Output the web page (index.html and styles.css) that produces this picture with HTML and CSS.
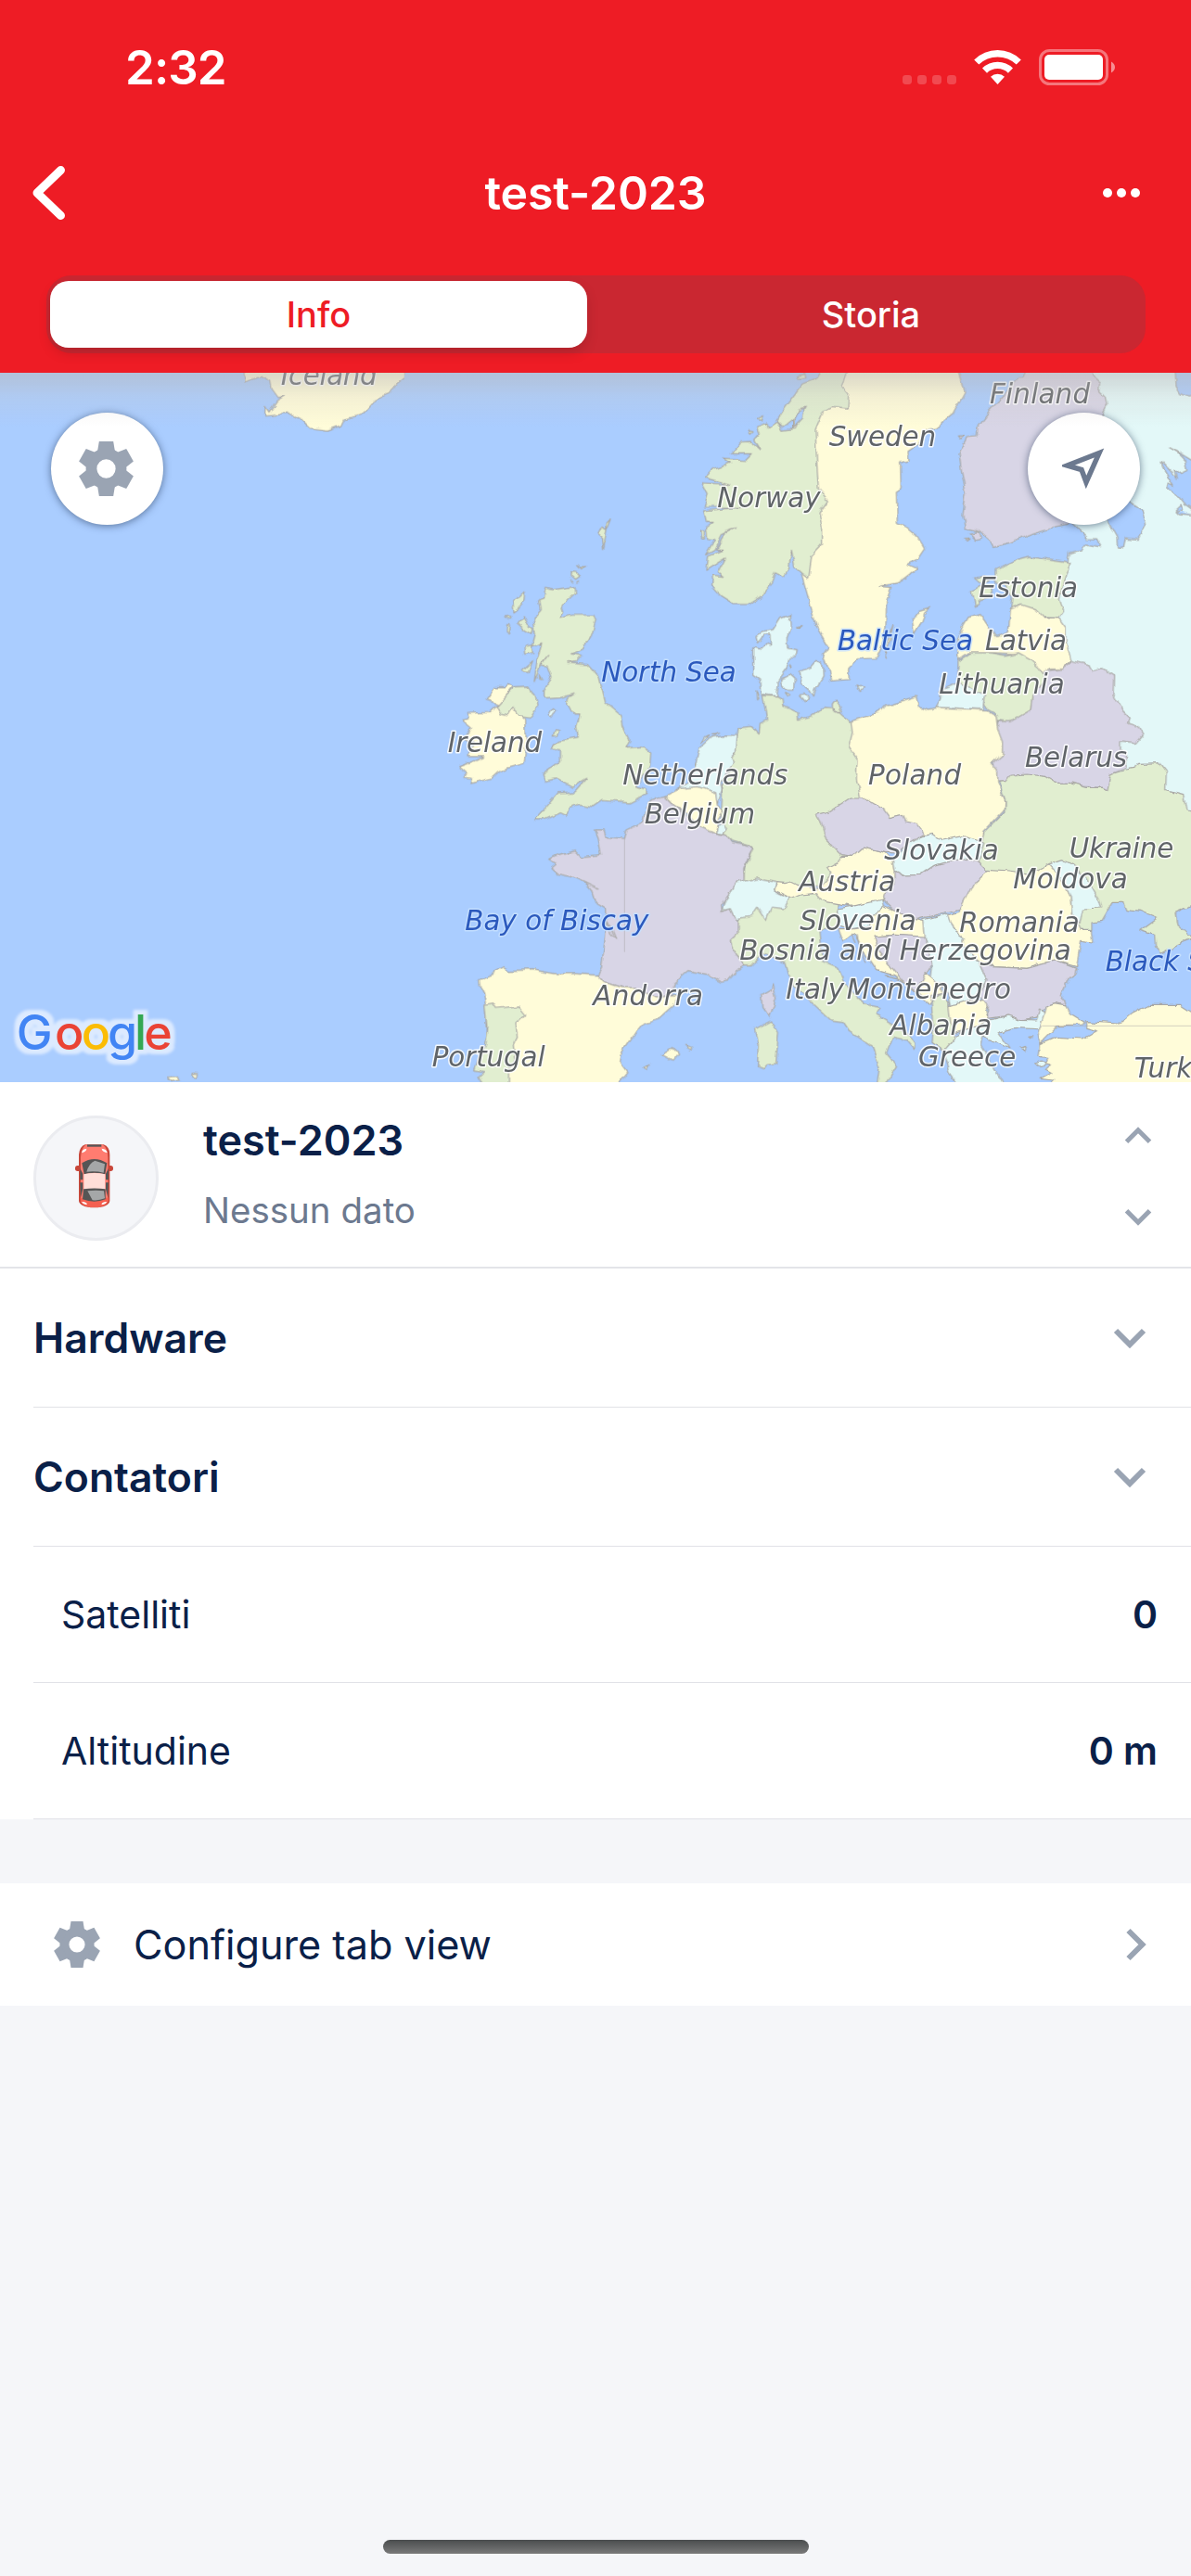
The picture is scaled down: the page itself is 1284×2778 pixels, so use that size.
FILE: index.html
```html
<!DOCTYPE html>
<html lang="it">
<head>
<meta charset="utf-8">
<title>test-2023</title>
<link rel="stylesheet" href="styles.css">
</head>
<body>
<svg width="0" height="0" class="defs" aria-hidden="true">
  <symbol id="gear" viewBox="-30 -30 60 60">
    <circle r="16.3" fill="none" stroke="currentColor" stroke-width="12"/>
    <g fill="currentColor">
      <path id="tooth" d="M-7.8-30H7.8L9.6-19H-9.6Z"/>
      <use href="#tooth" transform="rotate(60)"/><use href="#tooth" transform="rotate(120)"/>
      <use href="#tooth" transform="rotate(180)"/><use href="#tooth" transform="rotate(240)"/>
      <use href="#tooth" transform="rotate(300)"/>
    </g>
  </symbol>
  <symbol id="chevron" viewBox="0 0 36 22"><path d="M3 3L18 18L33 3" fill="none" stroke="currentColor" stroke-width="6"/></symbol>
</svg>
<div class="screen">
  <header class="header">
    <div class="status">
      <span class="time">2:32</span>
      <svg class="indicators" width="230" height="44" viewBox="972 50 230 44">
        <g fill="#fff" opacity=".2"><rect x="973" y="81" width="10" height="10" rx="3.4"/><rect x="989" y="81" width="10" height="10" rx="3.4"/><rect x="1005" y="81" width="10" height="10" rx="3.4"/><rect x="1021" y="81" width="10" height="10" rx="3.4"/></g>
        <g fill="#fff"><path d="M1050.2 64.5A36 36 0 0 1 1100.8 64.5L1095.7 69.6A29 29 0 0 0 1055.3 69.6Z"/><path d="M1059 73.5A23.5 23.5 0 0 1 1092 73.5L1086.900 78.700A16.500 16.500 0 0 0 1064 78.700Z"/><path d="M1068 82.800A11 11 0 0 1 1083 82.800L1075.500 91Z"/></g>
        <rect x="1121.500" y="54.500" width="72" height="36" rx="10" fill="none" stroke="#fff" stroke-width="3" opacity=".4"/>
        <rect x="1126" y="59" width="63" height="27" rx="5" fill="#fff"/>
        <path d="M1198 66.500Q1202 69 1202 72.500T1198 78.500Z" fill="#fff" opacity=".5"/>
      </svg>
    </div>
    <div class="navbar">
      <svg class="back" width="38" height="62" viewBox="33 177 38 62"><path d="M65.500 183.500L40 208L65.500 232.500" fill="none" stroke="#fff" stroke-width="9" stroke-linecap="round" stroke-linejoin="round"/></svg>
      <h1 class="title">test-2023</h1>
      <svg class="more" width="40" height="10" viewBox="0 0 40 10" fill="#fff"><circle cx="5" cy="5" r="5"/><circle cx="20" cy="5" r="5"/><circle cx="35" cy="5" r="5"/></svg>
    </div>
    <div class="segments"><span class="segment active">Info</span><span class="segment">Storia</span></div>
  </header>

  <section class="map">
    <svg class="map-art" width="1284" height="765" viewBox="-1320 6 3852 2295">
      <defs>
        <filter id="coast" x="-1330" y="-20" width="3880" height="2340" filterUnits="userSpaceOnUse" color-interpolation-filters="sRGB"><feTurbulence type="fractalNoise" baseFrequency=".022" numOctaves="3" seed="4"/><feDisplacementMap in="SourceGraphic" scale="20" xChannelSelector="R" yChannelSelector="G"/></filter>
        <filter id="halo" x="-1320" y="2020" width="620" height="280" filterUnits="userSpaceOnUse" color-interpolation-filters="sRGB"><feMorphology in="SourceAlpha" operator="dilate" radius="15"/><feGaussianBlur stdDeviation="4" result="grown"/><feFlood flood-color="#dceaff"/><feComposite in2="grown" operator="in" result="edge"/><feMerge><feMergeNode in="edge"/><feMergeNode in="SourceGraphic"/></feMerge></filter>
      </defs>
      <g class="land" filter="url(#coast)">
        <path class="y" d="M-530-20L-525 33-480 15-445 33-440 59-420 86-400 81-425 96-450 133-462 115-463 143-390 136-350 155-320 185-260 192-220 177-210 155-150 143-110 96-60 74-40 44-10 22-10-20Z"/>
        <path class="y" d="M-780 2285l30-3 15 12-30 5zM-698 2272l16 1-2 10-16-2z"/>
        <g transform="translate(1242 0)">
          <path class="c" d="M940-20H1238L1242 50 1256 74 1278 84 1310 80V1600H740V1000L892 618 895 588 940 578 948 562 1000 572 985 543 953 542 918 505 890 480Z"/>
          <path class="s" d="M1020 485L1050 540 1052 570 1072 570 1078 540 1120 545 1145 495 1133 450 1085 420ZM1222 250L1260 270 1310 300V460L1268 430 1248 405 1213 375 1216 362 1233 370 1198 310 1194 292 1220 320 1243 348 1236 320 1258 335 1280 325 1273 290 1248 265ZM1242 450L1258 435 1265 450 1242 452 1252 462 1300 466"/>
          <path class="p" d="M765-20L745 20 728 20 690 75 640 130 600 185 598 212 565 215 540 265 548 330 562 395 552 470 560 508 608 520 640 548 650 568 710 555 780 525 820 512 890 495 960 430 1010 350 1040 240 1005 140 1020 110 1015 85 995 65 998 40 975 20 970-20ZM538 210h16l-8 10zM575 525l30-5 8 20-20 5zM560 545l16-2-8 7z"/>
          <path class="y" d="M535-20L545 20 558 70 520 140 465 185 440 190 405 240 375 260 378 290 350 297 352 380 337 390 340 490 370 505 400 530 428 575 405 610 375 625 405 640 345 685 285 697 320 700 305 745 303 830 285 900 270 932 210 935 185 960 187 998 125 1003 118 965 100 920 118 895 80 830 55 745 30 655 0 500 0 100 120-20ZM330 820L318 870 300 925 304 890ZM445 765L410 775 388 805 395 850 420 810 428 780Z"/>
        </g>
        <path class="g" d="M1344-20L1317 25 1275 42 1220 115 1190 160 1212 180 1250 150 1265 125 1285 120 1260 155 1250 187 1212 192 1195 165 1165 185 1160 168 1130 180 1138 200 1118 222 1140 258 1108 228 1075 230 1045 268 1110 268 1088 290 1020 285 1042 300 985 320 960 345 1040 367 950 362 970 400 958 440 1075 442 956 452 965 490 990 490 965 510 968 542 992 545 962 595 990 580 1015 530 1058 508 1030 520 995 580 1018 580 968 600 963 645 1027 605 1003 650 1022 665 985 660 983 700 1010 730 1050 755 1100 755 1140 730 1180 680 1190 650 1215 662 1232 640 1240 580 1250 635 1272 655 1292 670 1302 600 1340 560 1340 510 1329 460 1357 420 1327 385 1320 260 1317 190 1342 130 1372 115 1422 120 1424 80 1400 50 1430-20ZM1125 160l25-12-6 14zM1100 190l16 4-8 8zM948 515h10v28h-8zM1255 15l25-5 4 12-20 3z"/>
        <path class="s" d="M1242 185L1246 160 1260 135 1282 122 1276 150Z"/>
        <g transform="translate(1242 0)">
          <path class="g" d="M660 640L720 612 765 600 830 612 890 620 900 625 885 655 865 740 878 775 858 803 815 800 780 770 740 757 707 770 712 730 690 700 660 690ZM580 710L610 695 650 705 640 730 605 740 590 765 585 740ZM590 668L620 660 640 680 615 690Z"/>
          <path class="y" d="M537 935L535 870 555 825 570 800 612 788 640 830 665 860 700 845 706 770 745 757 785 770 818 803 865 803 885 830 885 870 902 935 870 965 835 965 815 975 770 937 730 915 640 912 570 912Z"/>
          <path class="g" d="M537 940L580 912 640 912 690 920 730 912 770 935 815 975 815 1010 780 1045 775 1095 740 1120 700 1135 660 1130 655 1105 618 1085 622 1045 580 1030 535 1020Z"/>
          <path class="c" d="M465 1088L480 1060 480 1035 540 1010 580 1030 622 1045 618 1095Z"/>
          <path class="p" d="M665 1133L705 1135 775 1095 780 1045 818 1010 820 970 870 965 905 937 960 950 970 970 1000 962 1040 990 1038 1050 1060 1090 1090 1120 1085 1140 1115 1150 1132 1180 1110 1205 1065 1200 1065 1225 1085 1250 1080 1285 1030 1305 1020 1355 1000 1345 700 1330 660 1330 650 1260Z"/>
          <path class="y" d="M190 1133L285 1103 305 1080 400 1053 410 1085 440 1095 470 1088 630 1097 660 1115 665 1160 680 1200 680 1240 645 1270 665 1295 665 1335 690 1390 688 1420 620 1490 620 1540 200 1540 150 1400Z"/>
        </g>
        <path class="g" d="M1147 1050L1190 1052 1212 1060 1215 1085 1260 1105 1262 1130 1302 1120 1342 1088 1375 1090 1405 1118 1432 1135 1437 1170 1424 1220 1452 1260 1450 1320 1464 1385 1460 1600 1360 1670 1190 1655 1085 1650 1088 1610 1115 1540 1045 1520 1010 1495 1015 1390 1017 1340 1040 1290 1045 1250 1060 1240 1068 1155 1110 1150 1135 1175 1138 1140 1160 1130ZM1375 1080l12-15 14 20-8 22-18-8z"/>
        <path class="c" d="M1143 1045L1140 1000 1118 985 1118 895 1140 900 1160 880 1172 885 1170 855 1150 855 1130 880 1125 860 1145 845 1180 840 1205 800 1242 788 1235 800 1237 830 1225 865 1227 900 1255 905 1252 925 1232 925 1225 960 1195 1000 1190 1052ZM1205 995L1235 985 1252 1000 1250 1030 1225 1030 1208 1015ZM1267 975L1302 960 1322 937 1340 945 1342 990 1317 1030 1312 1055 1297 1030 1272 1010ZM1265 1048L1285 1045 1295 1060 1285 1070ZM1452 1013l22 12-12 12zM1256 828l16-4-10 8zM1238 950l4 16h-5zM1220 1040l18 8-10 4zM1128 1035l8 20-6 6z"/>
        <path class="y" d="M325 1010L340 1020 320 1045 345 1100 380 1125 382 1200 375 1270 300 1290 270 1318 200 1335 205 1318 180 1315 190 1302 165 1280 205 1265 245 1245 195 1245 210 1205 180 1190 205 1155 175 1130 198 1125 190 1108 260 1105 285 1080 295 1078 253 1065 280 1025 315 1025Z"/>
        <path class="g" d="M285 1085L320 1045 345 1022 390 1020 408 1050 415 1090 395 1120 355 1115 338 1090 325 1112 298 1108Z"/>
        <path class="g" d="M443 703L470 708 540 698 542 720 495 765 500 780 490 800 530 790 600 790 607 810 590 860 565 900 530 915 560 920 545 940 515 945 580 950 615 990 635 1070 690 1115 695 1150 717 1195 705 1220 760 1215 788 1240 785 1280 735 1340 772 1350 770 1370 715 1398 630 1390 600 1410 550 1402 525 1412 512 1440 490 1430 440 1452 410 1452 440 1420 485 1365 540 1362 578 1318 530 1347 480 1320 440 1327 432 1305 490 1265 490 1225 462 1225 490 1195 550 1185 545 1150 555 1110 535 1110 518 1080 520 1055 540 1042 490 1055 440 1058 440 1035 462 990 450 955 430 950 455 920 425 960 408 1005 418 930 432 880 400 895 412 850 405 800 430 770 425 740 440 735Z"/>
        <path class="g" d="M380 713l-2 30-20 25-16 12-4-38 22-10zM355 815l18-20 10 20 22 20-4 15-20-12zM375 895l24-5 4 25-26 4zM367 970l36-32-16 38zM315 795l20-2-4 10zM320 820l8 5-3 20-7-3zM657 477l-12 30-8 35-5 30-3-30-14-12 12-22 14 8 2-25zM528 650l16 2 12 12-14 10-14-12zM545 630l10 10 22-8-12 12zM526 675l8 10m10 0l8-6M425 980l8 16-8-2zM466 1182l6-22 14 4-8 16z"/>
        <path class="c" d="M457 1112l12-22 10 8-14 22z"/>
        <g transform="translate(0 1140)">
          <path class="c" d="M870 215L905 195 925 150 942 80 980 45 1020 38 1065 40 1060 100 1045 110 1055 130 1035 155 1010 195 1015 215 1000 260 985 225 940 205 890 218ZM945 65l10-18 20-10-20 20zM985 35l25-6-20 8z"/>
          <path class="g" d="M1065 640L1045 695 1055 750 1085 785 1110 785 1150 745 1220 770 1230 810 1250 850 1302 900 1367 960 1407 965 1427 995 1502 1045 1527 1115 1517 1190 1545 1165 1577 1110 1547 1070 1567 1015 1612 1025 1637 1055 1642 1035 1612 1000 1562 970 1512 940 1527 920 1477 910 1432 870 1407 830 1392 790 1342 770 1332 670 1392 660 1387 550 1100 550Z"/>
          <path class="p" d="M785 245L830 235 860 265 945 335 1000 360 1030 365 1045 385 1115 402 1100 430 1085 470 1087 515 1060 520 1010 590 1012 610 1045 600 1065 640 1065 680 1045 700 1055 750 1085 785 1065 795 1035 830 1010 835 965 812 905 800 860 840 858 880 800 885 740 855 690 855 630 835 612 815 625 790 638 690 640 640 638 600 605 580 592 540 570 515 530 497 480 487 462 470 480 455 455 440 475 428 540 410 560 432 625 425 615 370 605 345 632 345 640 368 700 373 708 345 760 320 775 265Z"/>
          <path class="l" d="M640 640L660 665 675 702 662 690ZM570 515L616 537"/>
          <path class="y" d="M830 235L880 212 940 205 995 225 1000 265 1020 285 1000 320 995 358 945 335 900 290 860 265ZM612 815L540 810 470 810 400 797 325 800 305 788 280 800 275 812 230 830 232 850 245 870 250 905 260 1200 650 1200 708 1130 685 1100 690 1070 740 995 760 970 810 955 865 905 868 885 800 885 740 855 690 855 630 835ZM823 1073L860 1050 875 1068 858 1090 835 1078ZM895 1042L920 1048 918 1056ZM762 1113L780 1105 772 1120Z"/>
          <path class="c" d="M1000 330L1020 325 1030 345 1015 362 995 355Z"/>
          <path class="g" d="M248 910L275 905 285 922 360 915 380 940 345 975 350 1010 340 1040 345 1090 325 1125V1200H255L228 1145 245 1130 215 1125 225 1090 248 1040 255 980ZM1120 990L1172 963 1198 1000 1190 1100 1160 1105 1150 1118 1130 1110 1132 1040Z"/>
          <path class="p" d="M1180 842L1190 890 1170 952 1145 920 1142 880 1175 862Z"/>
          <path class="c" d="M1060 518L1130 500 1190 512 1190 545 1235 565 1215 600 1175 595 1158 635 1130 595 1110 625 1060 632 1045 600 1012 608 1025 570Z"/>
        </g>
        <g transform="translate(1242 1140)">
          <path class="g" d="M620 355L690 285 690 250 668 190 690 188 705 168 760 165 820 172 850 190 900 190 950 205 1000 205 1020 215 1030 165 1080 150 1110 145 1120 130 1185 128 1210 160 1208 215 1265 230 1275 285 1310 290V585L1270 597 1240 610 1245 650 1310 670V690L1245 715 1195 742 1175 720 1172 685 1125 670 1180 630 1130 610 1080 605 1070 580 1035 580 1000 640 975 645 975 670 900 690 640 500 600 450Z"/>
          <path class="s" d="M1310 582L1270 597 1240 610 1245 650 1285 685 1320 680Z"/>
          <path class="y" d="M630 475L700 480 770 490 830 455 870 500 900 560 905 620 930 670 970 670 975 705 935 700 920 785 850 765 760 790 650 785 605 770 555 720 555 690 520 665 500 620 540 610 560 560 590 500ZM160 430L195 430 232 402 300 418 325 445 335 500 330 520 295 555 290 572 240 585 195 592 95 575 75 550 30 555 0 568-20 558-57 540-50 512-20 515 0 510 20 520 80 540 125 490 112 470 150 450Z"/>
          <path class="c" d="M830 455L875 440 910 460 950 500 990 570 998 597 940 600 930 650 905 620 900 560 870 500ZM325 445L360 410 400 370 455 358 485 378 550 365 600 378 620 388 600 450 550 440 460 460 415 490 365 492 330 475Z"/>
          <path class="p" d="M330 475L365 492 415 490 460 460 550 435 600 450 628 478 590 510 545 600 480 615 405 635 330 605 292 570 295 550 330 520ZM78 295L120 285 190 240 230 240 290 275 315 308 355 298 365 318 400 325 425 360 380 390 340 420 300 418 232 402 200 430 160 425 110 375 92 320Z"/>
          <path class="y" d="M150 665L200 665 250 655 255 625 295 590 400 635 425 640 450 685 430 695 330 685 265 690 280 740 350 820 395 865 330 815 275 800 235 740 200 680 180 695 165 705 155 680Z"/>
          <path class="c" d="M145 600L195 592 290 570 295 590 255 625 250 655 190 665 150 650Z"/>
          <path class="l" d="M190 680l14 30m6-25l6 30m12 18l12 42M300 815l45 12m-30 3l35 14"/>
          <path class="p" d="M265 690L330 685 430 690 455 780 430 820 400 870 355 830 280 740Z"/>
          <path class="c" d="M425 635L500 615 520 665 555 690 555 720 605 770 630 830 605 880 570 900 515 915 505 870 450 820 455 780 430 690Z"/>
          <path class="p" d="M605 775L650 785 760 790 850 765 918 790 915 810 890 830 868 878 888 912 850 905 820 915 795 950 740 960 700 945 635 955 635 920 605 880 630 830Z"/>
          <path class="c" d="M525 1010L600 970 700 945 740 958 790 960 800 930 818 940 805 990 720 985 670 1000 705 1050 660 1030 640 1025 615 1010 610 1040 650 1110 690 1180 545 1180 510 1130 490 1060ZM740 1050l15-5-5 12zM785 1100l20-8 12 12-14 12zM765 1015l10-2-2 8z"/>
          <path class="y" d="M430 805L480 845 485 875 450 880 445 910 400 870ZM508 915L570 895 625 900 635 955 600 980 525 1000 508 960ZM820 915L850 905 888 912 905 945 945 970 940 978 860 980 800 1040 795 1000 815 940ZM950 965L1060 972 1100 940 1160 910 1255 910 1310 945V1200H800L845 1155 805 1150 840 1130 820 1120 835 1105 815 1100 825 1078 795 1075 800 1040 860 1015 940 1020 985 995 950 985Z"/>
          <path class="g" d="M450 890L480 875 508 900 515 960 525 1020 490 1060 450 1030 455 980Z"/>
        </g>
      </g>
      <path d="M700 1513V1880M2050 2119H2532" fill="none" stroke="#a9a8a5" stroke-width="3" opacity=".5"/>
      <g class="labels">
        <text x="-412" y="44" textLength="312">Iceland</text>
        <text x="1000" y="440" textLength="334">Norway</text>
        <text x="1361" y="242" textLength="346">Sweden</text>
        <text x="1881" y="105" textLength="324">Finland</text>
        <text x="1846" y="732" textLength="320">Estonia</text>
        <text x="1866" y="902" textLength="264">Latvia</text>
        <text x="1717" y="1044" textLength="406">Lithuania</text>
        <text x="128" y="1234" textLength="304">Ireland</text>
        <text x="694" y="1338" textLength="534">Netherlands</text>
        <text x="764" y="1464" textLength="358">Belgium</text>
        <text x="598" y="2051" textLength="356">Andorra</text>
        <text x="77" y="2249" textLength="366">Portugal</text>
        <text x="1072" y="1905" textLength="1072">Bosnia and Herzegovina</text>
        <text x="1222" y="2032" textLength="188">Italy</text>
        <text x="1488" y="1338" textLength="300">Poland</text>
        <text x="1995" y="1280" textLength="330">Belarus</text>
        <text x="1540" y="1582" textLength="370">Slovakia</text>
        <text x="1264" y="1684" textLength="312">Austria</text>
        <text x="2138" y="1575" textLength="338">Ukraine</text>
        <text x="1957" y="1675" textLength="370">Moldova</text>
        <text x="1267" y="1808" textLength="376">Slovenia</text>
        <text x="1783" y="1814" textLength="388">Romania</text>
        <text x="1418" y="2032" textLength="532">Montenegro</text>
        <text x="1558" y="2147" textLength="330">Albania</text>
        <text x="1650" y="2249" textLength="316">Greece</text>
        <text x="2348" y="2285">Turkey</text>
        <g class="sea"><text x="625" y="1004" textLength="436">North Sea</text><text x="1389" y="903" textLength="438">Baltic Sea</text><text x="184" y="1808" textLength="594">Bay of Biscay</text><text x="2255" y="1942" textLength="430">Black Sea</text></g>
      </g>
      <text class="google" y="2196" filter="url(#halo)"><tspan x="-1267" fill="#4285f4">G</tspan><tspan x="-1143" fill="#ea4335">o</tspan><tspan x="-1057" fill="#fbbc05">o</tspan><tspan x="-972" fill="#4285f4">g</tspan><tspan x="-885" fill="#34a853">l</tspan><tspan x="-854" fill="#ea4335">e</tspan></text>
    </svg>
    <div class="map-controls">
      <button class="round"><svg class="gear-large" width="59" height="61"><use href="#gear"/></svg></button>
      <button class="round"><svg class="arrow" width="46" height="46" viewBox="0 0 46 46"><path d="M40 5.500L5.500 19 21 23.500 26 37Z" fill="none" stroke="#6c798f" stroke-width="5.500"/></svg></button>
    </div>
    <div class="map-shade"></div>
  </section>

  <section class="vehicle">
    <svg class="avatar" width="135" height="135" viewBox="18 24 405 405">
      <circle cx="220.500" cy="226.500" r="198" fill="#f5f6f9" stroke="#ebecf0" stroke-width="9"/>
      <rect x="153" y="186" width="123" height="18" rx="8" fill="#c9473a"/>
      <path d="M185 118H245Q265 125 265 150V300Q262 321 215 322Q168 321 165 300V150Q167 125 185 118Z" fill="#c9473a"/>
      <path d="M188 118H242Q258 130 259 160V302Q253 320 215 321Q177 320 171 302V160Q173 130 188 118Z" fill="#ff7c70"/>
      <path d="M170 290H260V302Q253 320 215 321Q177 320 171 302Z" fill="#f45f50"/>
      <path d="M192 118H238V125H192Z" fill="#555"/>
      <path d="M169 195L178 212V232H169ZM169 241H178V262L171 290ZM261 195L252 212V232H261ZM261 241H252V262L259 290Z" fill="#555"/>
      <path d="M175 178Q215 152 256 178L250 214Q215 205 182 214Z" fill="#555"/>
      <path d="M190 206Q198 178 217 170L249 181 245 209Q220 203 190 206Z" fill="#a5a7a8"/>
      <path d="M181 214Q215 206 250 214V265Q215 258 181 265Z" fill="#ffded8"/>
      <path d="M180 262Q215 257 251 262V295Q215 309 177 295Z" fill="#555"/>
      <path d="M193 268Q220 264 246 268L249 292Q230 300 209 298Z" fill="#a5a7a8"/>
      <path d="M174 145Q176 132 190 131Q190 140 174 145ZM257 145Q255 132 239 131Q239 140 257 145ZM174 303Q188 302 192 311Q180 314 174 303ZM256 303Q242 302 238 311Q250 314 256 303Z" fill="#fff"/>
    </svg>
    <div class="vehicle-text"><h2 class="name">test-2023</h2><p class="state">Nessun dato</p></div>
    <div class="stepper"><svg class="up" width="30" height="19"><use href="#chevron"/></svg><svg width="30" height="19"><use href="#chevron"/></svg></div>
  </section>

  <section class="list">
    <div class="row head"><span class="label">Hardware</span><svg width="36" height="22"><use href="#chevron"/></svg></div>
    <div class="row head"><span class="label">Contatori</span><svg width="36" height="22"><use href="#chevron"/></svg></div>
    <div class="row item"><span>Satelliti</span><b>0</b></div>
    <div class="row item"><span>Altitudine</span><b>0 m</b></div>
  </section>

  <section class="configure">
    <svg class="gear-small" width="50" height="50"><use href="#gear"/></svg>
    <span class="configure-label">Configure tab view</span>
    <svg class="go" width="24" height="36" viewBox="0 0 24 36"><path d="M3.500 3L18.500 18L3.500 33" fill="none" stroke="#9aa4b3" stroke-width="6"/></svg>
  </section>
  <div class="home"></div>
</div>
</body>
</html>
```
FILE: styles.css
```css
* { box-sizing: border-box; }
body { margin: 0; background: #f5f6f9; font-family: Inter, "Liberation Sans", sans-serif; color: #0a2048; }
h1, h2, p { margin: 0; }
svg { display: block; flex: none; }
.defs { position: absolute; }
.screen { width: 1284px; height: 2778px; display: flex; flex-direction: column; overflow: hidden; }

.header { height: 402px; background: #ee1c25; color: #fff; flex: none; }
.status { height: 144px; padding: 50px 82px 0 135px; display: flex; justify-content: space-between; align-items: flex-start; }
.time { font-size: 51px; line-height: 46px; font-weight: 600; letter-spacing: -.9px; }
.navbar { height: 128px; padding: 0 57px 0 33px; display: grid; grid-template-columns: 60px 1fr 36px; align-items: center; }
.title { font-size: 50px; line-height: 60px; font-weight: 600; text-align: center; letter-spacing: -.1px; padding-bottom: 1px; }
.more { margin-left: -2px; }
.segments { margin: 25px 49px 0 50px; height: 84px; border-radius: 27px; background: #ca2731; padding: 6px 4px; display: flex; }
.segment { flex: 1; border-radius: 20px; font-size: 38px; line-height: 72px; font-weight: 500; text-align: center; padding-left: 14px; }
.segment.active { flex: 0 0 579px; padding: 0; background: #fff; color: #ee1c25; box-shadow: 0 6px 14px rgba(0,0,0,.13); }

.map { height: 765px; position: relative; background: #aacdff; overflow: hidden; flex: none; }
.land path { stroke: #a9a8a5; stroke-width: 3.5; stroke-linejoin: round; }
.land .y { fill: #fffcd9; }
.land .g { fill: #e1eed0; }
.land .p { fill: #d8d5e6; }
.land .c { fill: #e3f8f8; }
.land .s { fill: #aacdff; }
.land .l { fill: none; }
.labels { font: italic 88px "DejaVu Sans", sans-serif; fill: #606468; stroke: rgba(255,255,255,.85); stroke-width: 9px; stroke-linejoin: round; paint-order: stroke; }
.sea { fill: #2b59bd; stroke: rgba(200,224,255,.85); }
.google { font: 500 156px Inter, sans-serif; }
.map-controls { position: absolute; top: 43px; left: 55px; right: 55px; display: flex; justify-content: space-between; }
.round { width: 121px; height: 121px; padding: 0; border: 0; border-radius: 50%; background: #fff; box-shadow: 0 1px 9px rgba(30,50,80,.6); display: flex; align-items: center; justify-content: center; color: #9aa4b3; }
.gear-large { margin-left: -3px; }
.arrow { margin-left: -2px; }
.map-shade { position: absolute; left: 0; right: 0; top: 0; height: 58px; background: linear-gradient(rgba(185,182,182,.52), rgba(200,195,190,.2) 45%, rgba(200,200,200,0)); }

.vehicle { height: 201px; flex: none; background: #fff; border-bottom: 2px solid #e3e4e9; display: flex; padding: 36px 42px 0 36px; }
.vehicle-text { margin-left: 48px; flex: 1; }
.name { font-size: 45px; line-height: 54px; font-weight: 600; }
.state { font-size: 38.5px; line-height: 48px; color: #6c798f; margin-top: 24px; }
.stepper { color: #9aa4b3; padding-top: 12px; display: flex; flex-direction: column; gap: 69px; }
.up { transform: rotate(180deg); }

.list { background: #fff; flex: none; }
.row { margin-left: 36px; border-bottom: 1px solid #e1e2e7; display: flex; align-items: center; justify-content: space-between; }
.head { height: 150px; padding-right: 48px; color: #9aa4b3; }
.label { color: #0a2048; font-size: 44.5px; font-weight: 600; }
.item { height: 147px; padding: 0 36px 0 30px; font-size: 41px; }
.item b { font-weight: 600; }

.configure { margin-top: 69px; height: 132px; flex: none; background: #fff; padding: 0 47px 0 58px; display: flex; align-items: center; color: #9aa4b3; }
.configure-label { flex: 1; margin-left: 36px; font-size: 43.2px; color: #0a2048; }
.home { width: 459px; height: 15px; margin: auto 0 24px 413px; border-radius: 8px; background: linear-gradient(#4a4d4e, #7a7a7a); flex: none; }
```
